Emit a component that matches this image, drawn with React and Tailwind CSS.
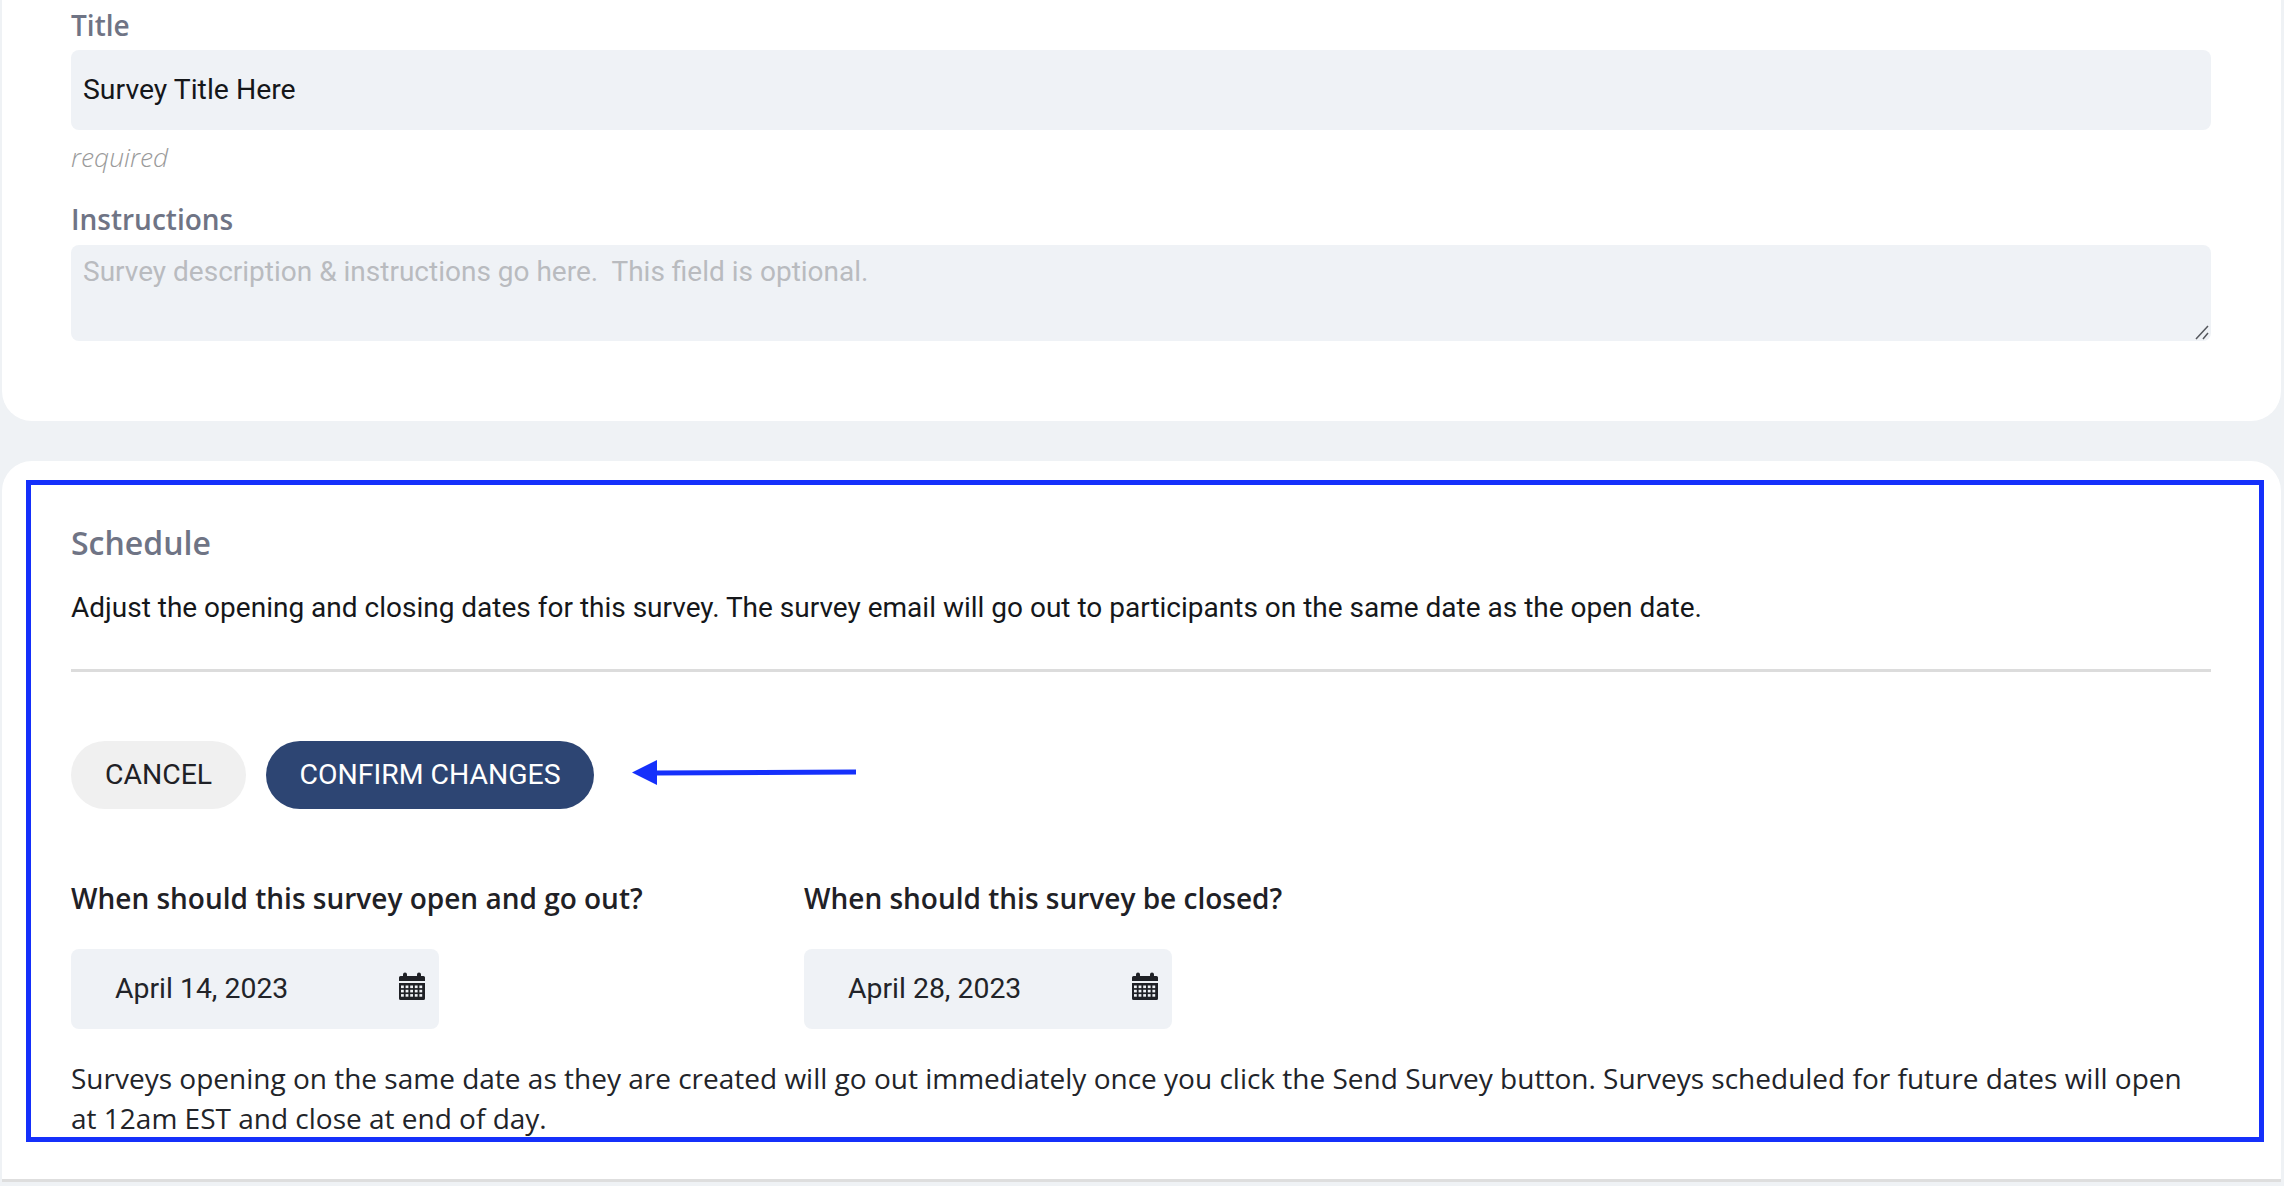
const openSans = 'font-["Open_Sans",sans-serif]';

function CalendarIcon() {
  const dots = [];
  for (let row = 0; row < 3; row++) {
    for (let col = 0; col < 5; col++) {
      dots.push(<rect key={`${row}-${col}`} x={2 + col * 4.6} y={13.5 + row * 4.3} width="2.8" height="2.6" fill="#eff2f6" />);
    }
  }
  return (
    <svg width="26" height="28" viewBox="0 0 26 28" className="shrink-0 -translate-y-[3px]">
      <path d="M4 2.5a2 2 0 0 1 4 0V4h10V2.500a2 2 0 0 1 4 0V4h2.500A1.500 1.500 0 0 1 26 5.500V9H0V5.500A1.500 1.500 0 0 1 1.500 4H4z" fill="#1f2126" />
      <path d="M0 11h26v15.500a1.500 1.500 0 0 1-1.500 1.500h-23A1.500 1.500 0 0 1 0 26.500z" fill="#1f2126" />
      {dots}
    </svg>
  );
}

function DateField({ label, value, className }) {
  return (
    <div className={className}>
      <h3 className={`${openSans} text-[28px] leading-[36px] font-semibold text-[#1f2126]`}>{label}</h3>
      <div className="mt-[33px] flex h-[80px] w-[368px] items-center justify-between rounded-lg bg-[#eff2f6] pl-[44px] pr-[14px]">
        <span className="font-['Roboto',sans-serif] text-[28.4px] text-[#222429]">{value}</span>
        <CalendarIcon />
      </div>
    </div>
  );
}

export default function App() {
  return (
    <div className="relative h-[1186px] w-[2284px] overflow-hidden bg-[#eff2f5]">
      <section className="ml-[2px] mr-[3px] h-[421px] rounded-b-[30px] bg-white pl-[69px] pr-[70px] pt-[8px]">
        <label className={`${openSans} block text-[28px] leading-[34px] font-semibold text-[#6f7485]`}>Title</label>
        <div className="mt-[8px] flex h-[80px] items-center rounded-lg bg-[#eff2f6] px-[12px] font-['Roboto',sans-serif] text-[28.4px] text-[#15171a]">
          Survey Title Here
        </div>
        <p className={`${openSans} mt-[12px] text-[26.4px] leading-[30px] font-light italic text-[#9a9a9a]`}>required</p>
        <label className={`${openSans} mt-[30px] block text-[28px] leading-[34px] font-semibold text-[#6f7485]`}>Instructions</label>
        <div className="relative mt-[9px]">
          <textarea
            readOnly
            placeholder="Survey description &amp; instructions go here.  This field is optional."
            className="block h-[96px] w-full resize-none rounded-lg bg-[#eff2f6] px-[12px] pt-[9px] font-['Roboto',sans-serif] text-[28px] leading-[36px] outline-none placeholder:text-[#b9bbbf]"
          />
          <svg className="absolute right-[2px] bottom-[1px]" width="14" height="15" viewBox="0 0 14 15">
            <path d="M1 14 13 1M8 14l5-6" stroke="#55585e" strokeWidth="1.500" fill="none" />
          </svg>
        </div>
      </section>

      <section className="mt-[40px] ml-[2px] mr-[3px] h-[721px] rounded-t-[30px] border-b-[3px] border-[#dedede] bg-white pl-[69px] pr-[70px] pt-[62px]">
        <h2 className={`${openSans} text-[32px] leading-[40px] font-semibold text-[#6f7485]`}>Schedule</h2>
        <p className="mt-[25px] font-['Roboto',sans-serif] text-[28px] leading-[40px] text-[#15171a]">
          Adjust the opening and closing dates for this survey. The survey email will go out to participants on the same date as the open date.
        </p>
        <hr className="mt-[41px] border-t-[3px] border-[#dcdcdc]" />
        <div className="mt-[69px] flex gap-[20px]">
          <button className="h-[68px] w-[175px] rounded-full bg-[#f0f0f0] font-['Roboto',sans-serif] text-[28.4px] text-[#1f2126]">CANCEL</button>
          <button className="h-[68px] w-[328px] rounded-full bg-[#2d4573] font-['Roboto',sans-serif] text-[28.4px] text-white">CONFIRM CHANGES</button>
        </div>
        <div className="mt-[71px] flex">
          <DateField label="When should this survey open and go out?" value="April 14, 2023" className="w-[733px]" />
          <DateField label="When should this survey be closed?" value="April 28, 2023" />
        </div>
        <p className={`${openSans} mt-[29px] text-[28px] leading-[40px] text-[#222429]`}>
          Surveys opening on the same date as they are created will go out immediately once you click the Send Survey button. Surveys scheduled for future dates will open at 12am EST and close at end of day.
        </p>
      </section>

      {/* annotation drawn over the screenshot */}
      <div className="absolute top-[480px] left-[26px] h-[662px] w-[2238px] border-[5px] border-[#1530fb]" />
      <svg className="absolute top-[758px] left-[630px]" width="230" height="30" viewBox="0 0 230 30">
        <path d="M2 14.500 27 2v25z" fill="#1530fb" />
        <path d="M25 12.500 226 11.500v5L25 17.500z" fill="#1530fb" />
      </svg>
    </div>
  );
}
